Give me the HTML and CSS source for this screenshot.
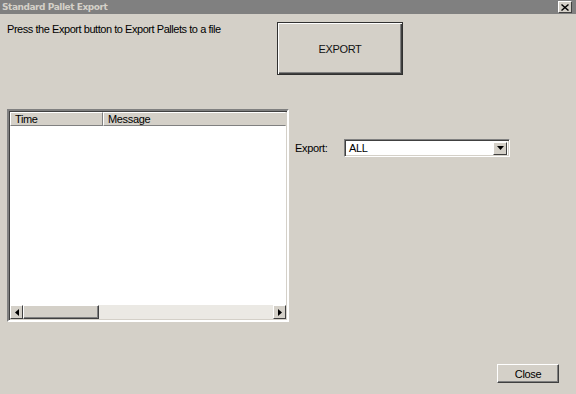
FILE: index.html
```html
<!DOCTYPE html>
<html lang="en">
<head>
    <meta charset="UTF-8">
    <meta name="viewport" content="width=device-width, initial-scale=1.0">
    <title>Standard Pallet Export</title>

    <link rel="stylesheet" href="styles.css">

</head>
<body>

    <div class="window">
        <div class="titlebar">
            <span class="title">Standard Pallet Export</span>
            <button type="button" class="title-close">
                <svg width="8" height="7" viewBox="0 0 8 7">
                    <path d="M0.5 0.5l7 6M7.5 0.5l-7 6" stroke="#000" stroke-width="1.4"/>
                </svg>
            </button>
        </div>

        <div class="content">
            <div class="top-row">
                <p class="hint">Press the Export button to Export Pallets to a file</p>
                <button type="button" class="btn-export">EXPORT</button>
            </div>

            <div class="middle-row">
                <div class="listview">
                    <div class="list-header">
                        <div class="col col-time">Time</div>
                        <div class="col col-message">Message</div>
                    </div>
                    <div class="list-body"></div>
                    <div class="hscroll">
                        <div class="sb-btn">
                            <svg width="4" height="7" viewBox="0 0 4 7"><path d="M4 0v7L0 3.5z" fill="#000"/></svg>
                        </div>
                        <div class="sb-thumb"></div>
                        <div class="sb-track"></div>
                        <div class="sb-btn">
                            <svg width="4" height="7" viewBox="0 0 4 7"><path d="M0 0v7l4-3.5z" fill="#000"/></svg>
                        </div>
                    </div>
                </div>

                <div class="export-field">
                    <label>Export:</label>
                    <div class="combo">
                        <span class="combo-value">ALL</span>
                        <div class="combo-btn">
                            <svg width="7" height="4" viewBox="0 0 7 4"><path d="M0 0h7L3.5 4z" fill="#000"/></svg>
                        </div>
                    </div>
                </div>
            </div>

            <div class="footer">
                <button type="button" class="btn-close">Close</button>
            </div>
        </div>
    </div>

</body>
</html>
```

FILE: styles.css
```css
body {
    margin: 0;
    background: #d4d0c8;
    font-family: "Liberation Sans", Arial, sans-serif;
    font-size: 11px;
    letter-spacing: -0.35px;
    color: #000;
}
.window {
    width: 576px;
    height: 394px;
    background: #d4d0c8;
    overflow: hidden;
}
.titlebar {
    height: 14px;
    background: #808080;
    display: flex;
    justify-content: space-between;
    align-items: center;
    padding: 0 4px 0 2px;
}
.title {
    color: #d4d0c8;
    font-family: "DejaVu Sans", sans-serif;
    font-weight: bold;
    font-size: 9px;
    letter-spacing: -0.45px;
}
.title-close {
    width: 14px;
    height: 12px;
    padding: 0;
    margin: 0;
    background: #d4d0c8;
    border: 1px solid;
    border-color: #fff #404040 #404040 #fff;
    display: flex;
    align-items: center;
    justify-content: center;
}
.content {
    padding: 0 17px 0 7px;
}
.top-row {
    display: flex;
    align-items: flex-start;
}
.hint {
    margin: 9px 0 0;
    width: 270px;
    line-height: 13px;
    letter-spacing: -0.45px;
}
.btn-export {
    margin-top: 8px;
    width: 126px;
    height: 53px;
    background: #d4d0c8;
    border: 1px solid #303030;
    box-shadow: inset 1px 1px #fff, inset -1px -1px #404040, inset -2px -2px #808080;
    font-family: "Liberation Sans", Arial, sans-serif;
    font-size: 11px;
    letter-spacing: -0.35px;
    color: #111;
    padding: 0;
}
.middle-row {
    display: flex;
    align-items: flex-start;
    margin-top: 34px;
}
.listview {
    width: 282px;
    height: 213px;
    box-sizing: border-box;
    border: 2px solid;
    border-color: #808080 #fff #fff #808080;
    box-shadow: inset 1px 1px #404040, inset -1px -1px #d4d0c8;
    background: #fff;
    display: flex;
    flex-direction: column;
    padding: 1px;
}
.list-header {
    display: flex;
    height: 14px;
    background: #d4d0c8;
}
.col {
    box-sizing: border-box;
    height: 14px;
    line-height: 12px;
    padding-left: 4px;
    border: 1px solid;
    border-color: #fff #808080 #808080 #fff;
}
.col-time {
    width: 93px;
}
.col-message {
    flex: 1;
    border-right-color: #d4d0c8;
}
.list-body {
    flex: 1;
}
.hscroll {
    display: flex;
    height: 14px;
    background: #ebe9e4;
}
.sb-btn {
    width: 13px;
    height: 14px;
    box-sizing: border-box;
    background: #d4d0c8;
    border: 1px solid;
    border-color: #fff #404040 #404040 #fff;
    display: flex;
    align-items: center;
    justify-content: center;
}
.sb-thumb {
    width: 76px;
    height: 14px;
    box-sizing: border-box;
    background: #d4d0c8;
    border: 1px solid;
    border-color: #fff #404040 #404040 #fff;
    box-shadow: inset -1px -1px #808080;
}
.sb-track {
    flex: 1;
}
.export-field {
    display: flex;
    align-items: center;
    margin: 30px 0 0 6px;
}
.export-field label {
    width: 49px;
}
.combo {
    width: 166px;
    height: 18px;
    box-sizing: border-box;
    border: 1px solid;
    border-color: #808080 #fff #fff #808080;
    box-shadow: inset 1px 1px #404040, inset -1px -1px #d4d0c8;
    background: #fff;
    display: flex;
    align-items: center;
    padding: 2px 2px 2px 4px;
}
.combo-value {
    flex: 1;
}
.combo-btn {
    width: 14px;
    height: 13px;
    box-sizing: border-box;
    background: #d4d0c8;
    border: 1px solid;
    border-color: #fff #404040 #404040 #fff;
    display: flex;
    align-items: center;
    justify-content: center;
}
.footer {
    display: flex;
    justify-content: flex-end;
    margin-top: 42px;
}
.btn-close {
    width: 62px;
    height: 19px;
    background: #d4d0c8;
    border: 1px solid;
    border-color: #fff #404040 #404040 #fff;
    box-shadow: inset -1px -1px #808080;
    font-family: "Liberation Sans", Arial, sans-serif;
    font-size: 11px;
    letter-spacing: -0.35px;
    padding: 0;
}
```
